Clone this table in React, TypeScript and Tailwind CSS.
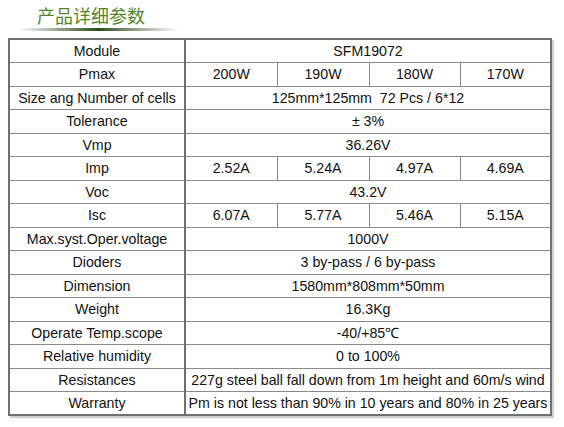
const rows: { label: string; values: string[] }[] = [
  { label: "Module", values: ["SFM19072"] },
  { label: "Pmax", values: ["200W", "190W", "180W", "170W"] },
  { label: "Size ang Number of cells", values: ["125mm*125mm\u00a0\u00a072 Pcs / 6*12"] },
  { label: "Tolerance", values: ["± 3%"] },
  { label: "Vmp", values: ["36.26V"] },
  { label: "Imp", values: ["2.52A", "5.24A", "4.97A", "4.69A"] },
  { label: "Voc", values: ["43.2V"] },
  { label: "Isc", values: ["6.07A", "5.77A", "5.46A", "5.15A"] },
  { label: "Max.syst.Oper.voltage", values: ["1000V"] },
  { label: "Dioders", values: ["3 by-pass / 6 by-pass"] },
  { label: "Dimension", values: ["1580mm*808mm*50mm"] },
  { label: "Weight", values: ["16.3Kg"] },
  { label: "Operate Temp.scope", values: ["-40/+85℃"] },
  { label: "Relative humidity", values: ["0 to 100%"] },
  { label: "Resistances", values: ["227g steel ball fall down from 1m height and 60m/s wind"] },
  { label: "Warranty", values: ["Pm is not less than 90% in 10 years and 80% in 25 years"] },
];

export default function App() {
  return (
    <div className="w-[564px] h-[427px] bg-white overflow-hidden font-['Liberation_Sans',Arial,sans-serif] text-[#111]">
      {/* Title */}
      <div className="pl-[37px] pt-[4px] h-[28px]">
        <h1 className="text-[18px] leading-[23px] text-[#55862a] font-['Noto_Sans_CJK_SC',sans-serif]">
          产品详细参数
        </h1>
      </div>
      <div className="ml-[18px] w-[160px] h-[3px] bg-gradient-to-r from-transparent via-[#2f4a22] to-transparent" />

      {/* Spec table */}
      <div className="ml-[8px] mt-[7px] w-[544px] shadow-[2px_2px_1px_rgba(0,0,0,0.18)]">
        <table className="w-full table-fixed border-collapse border-2 border-[#707070] text-[14.2px] leading-none">
          <colgroup>
            <col className="w-[176px]" />
            <col className="w-[92px]" />
            <col className="w-[92px]" />
            <col className="w-[91px]" />
            <col />
          </colgroup>
          <tbody>
            {rows.map((row) => (
              <tr key={row.label} className="h-[23.5px]">
                <td className="border border-[#8a8a8a] border-r-2 border-r-[#707070] text-center whitespace-nowrap">
                  {row.label}
                </td>
                {row.values.length === 1 ? (
                  <td colSpan={4} className="border border-[#8a8a8a] text-center whitespace-nowrap">
                    {row.values[0]}
                  </td>
                ) : (
                  row.values.map((v, i) => (
                    <td key={i} className="border border-[#8a8a8a] text-center whitespace-nowrap">
                      {v}
                    </td>
                  ))
                )}
              </tr>
            ))}
          </tbody>
        </table>
      </div>
    </div>
  );
}
